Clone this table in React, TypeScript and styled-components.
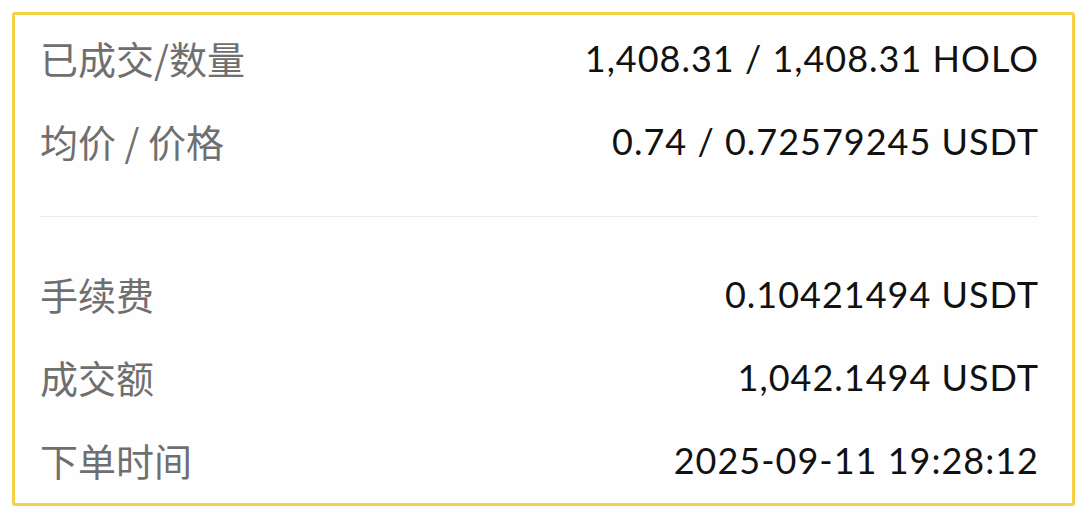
import React from "react";
import styled, { createGlobalStyle } from "styled-components";

const Global = createGlobalStyle`
  html, body { margin: 0; padding: 0; background: #ffffff; }
  body { width: 1086px; height: 517px; overflow: hidden; }
`;

const Page = styled.div`
  padding: 12px 11px 11px 12px;
  box-sizing: border-box;
  width: 1086px;
  height: 517px;
`;

const Card = styled.div`
  box-sizing: border-box;
  height: 494px;
  border: 3px solid #f2d347;
  border-radius: 3px;
  background: #fefefe;
  padding: 1px 34px 0 25px;
  display: flex;
  flex-direction: column;
`;

const Row = styled.div`
  height: 83px;
  display: flex;
  align-items: center;
  justify-content: space-between;
`;

const Label = styled.span`
  font-family: "Noto Sans CJK SC", "Noto Sans", sans-serif;
  font-size: 38px;
  color: #6f6f6f;
  font-weight: 400;
`;

const Value = styled.span`
  font-family: Lato, "Noto Sans", sans-serif;
  font-size: 36px;
  letter-spacing: 1px;
  margin-right: -1px;
  color: #111111;
`;

const Divider = styled.div<{ $top: number; $bottom: number }>`
  height: 1px;
  background: #ebebeb;
  margin: ${(p) => `${p.$top}px 0 ${p.$bottom}px`};
`;

const rowsTop = [
  { label: "已成交/数量", value: "1,408.31 / 1,408.31 HOLO" },
  { label: "均价 / 价格", value: "0.74 / 0.72579245 USDT" },
];
const rowsBottom = [
  { label: "手续费", value: "0.10421494 USDT" },
  { label: "成交额", value: "1,042.1494 USDT" },
  { label: "下单时间", value: "2025-09-11 19:28:12" },
];

export default function App() {
  return (
    <Page>
      <Global />
      <Card>
        {rowsTop.map((r) => (
          <Row key={r.label}>
            <Label>{r.label}</Label>
            <Value>{r.value}</Value>
          </Row>
        ))}
        <Divider $top={34} $bottom={35} />
        {rowsBottom.map((r) => (
          <Row key={r.label}>
            <Label>{r.label}</Label>
            <Value>{r.value}</Value>
          </Row>
        ))}
      </Card>
    </Page>
  );
}
